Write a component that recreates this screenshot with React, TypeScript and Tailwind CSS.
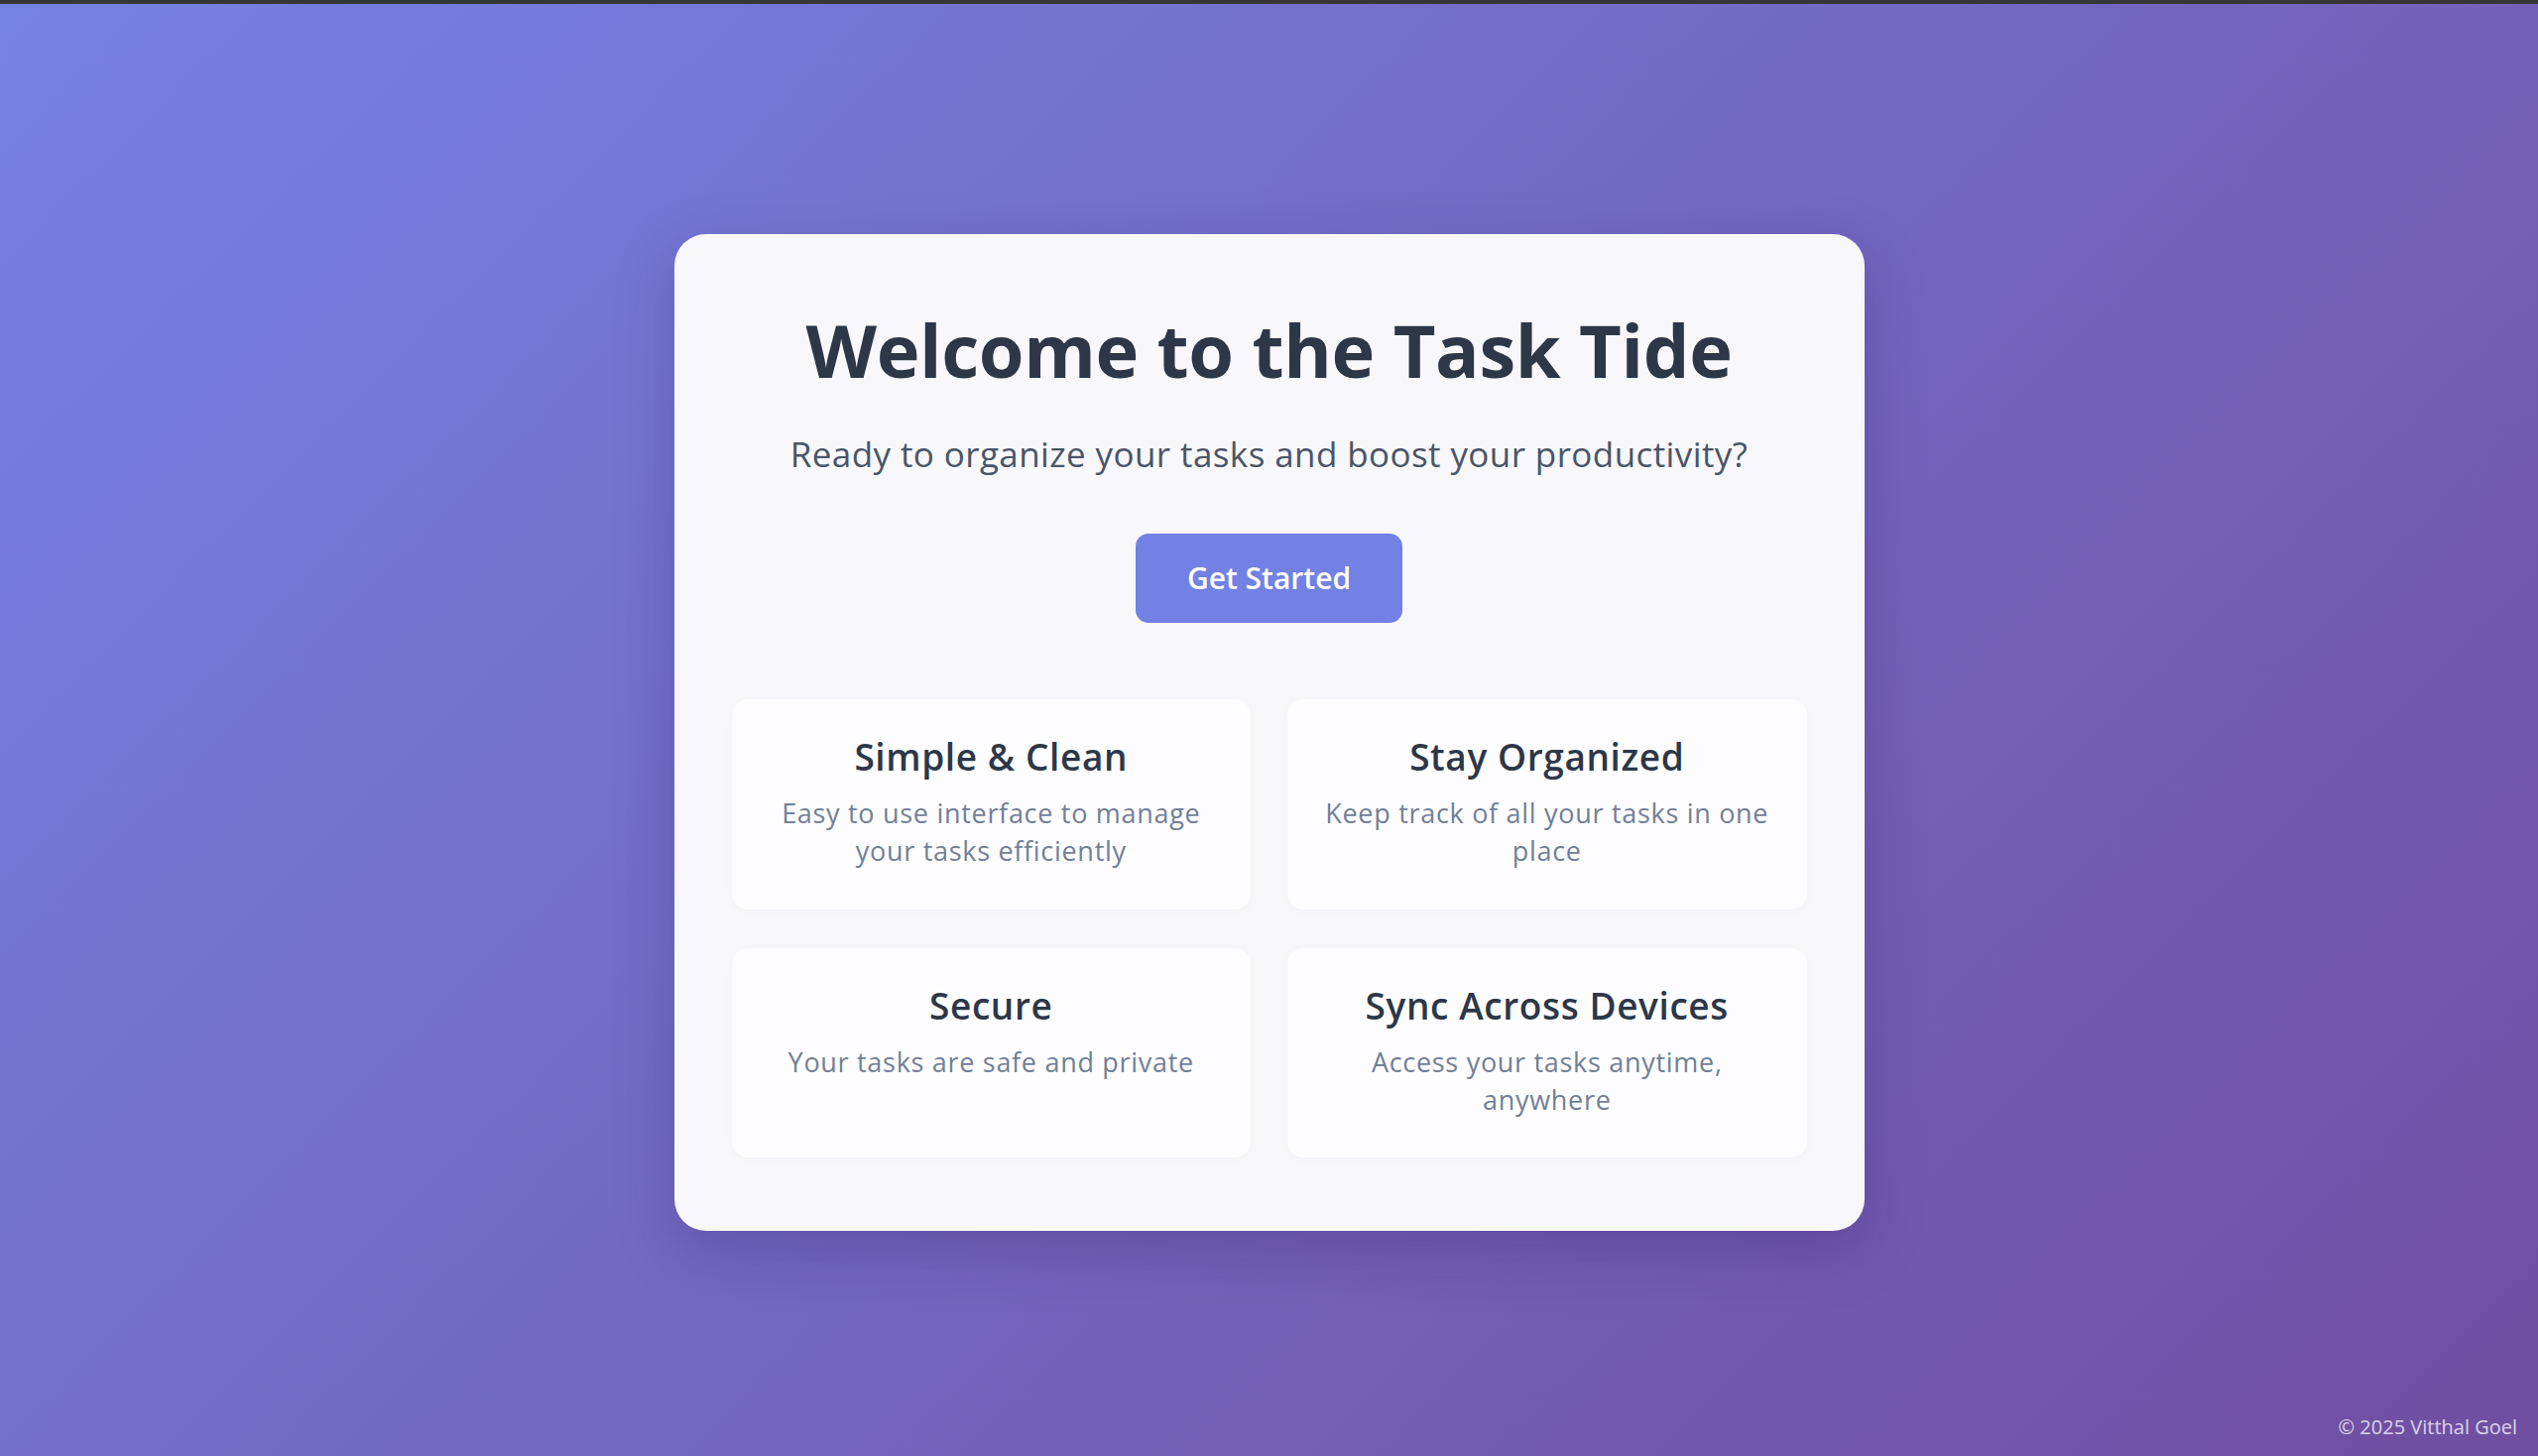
import React from 'react';

const FEATURES = [
  { title: 'Simple & Clean', desc: 'Easy to use interface to manage your tasks efficiently' },
  { title: 'Stay Organized', desc: 'Keep track of all your tasks in one place' },
  { title: 'Secure', desc: 'Your tasks are safe and private' },
  { title: 'Sync Across Devices', desc: 'Access your tasks anytime, anywhere' },
];

function FeatureCard({ title, desc }: { title: string; desc: string }) {
  return (
    <div className="bg-[#fdfdff] rounded-[16px] pt-[34px] pb-[39px] px-[32px] text-center shadow-[0_2px_8px_rgba(80,70,160,0.04)]">
      <h3 className="text-[37px] leading-[47px] font-semibold text-[#2d3748] tracking-[0.6px]">{title}</h3>
      <p className="mt-[15px] text-[27px] leading-[38.4px] text-[#718096] tracking-[0.7px]">{desc}</p>
    </div>
  );
}

export default function App() {
  return (
    <div className="min-h-screen flex flex-col font-['Open_Sans',sans-serif]">
      <div className="h-[4px] bg-[#363636] shrink-0" />
      <div className="relative flex-1 flex items-center justify-center pt-[5px] bg-linear-135 from-[#7482e4] to-[#704ea1]">
        <main className="w-[1200px] bg-[#f8f8fc] rounded-[32px] pt-[63px] pb-[74px] px-[58px] flex flex-col items-center shadow-[0_20px_60px_rgba(40,20,90,0.25)]">
          <h1 className="text-[74px] leading-[107px] font-bold text-[#2d3748] tracking-[-0.4px]">
            Welcome to the Task Tide
          </h1>
          <p className="mt-[25px] text-[35px] leading-[54px] text-[#4a5568] tracking-[0.4px]">
            Ready to organize your tasks and boost your productivity?
          </p>
          <button className="mt-[53px] w-[269px] h-[90px] rounded-[13px] bg-[#7281e3] text-white text-[30px] font-semibold">
            Get Started
          </button>
          <div className="mt-[77px] w-full grid grid-cols-2 gap-x-[37px] gap-y-[39px]">
            {FEATURES.map((f) => (
              <FeatureCard key={f.title} title={f.title} desc={f.desc} />
            ))}
          </div>
        </main>
        <footer className="absolute right-[21px] bottom-[14px] text-[20px] text-white/75">
          © 2025 Vitthal Goel
        </footer>
      </div>
    </div>
  );
}
